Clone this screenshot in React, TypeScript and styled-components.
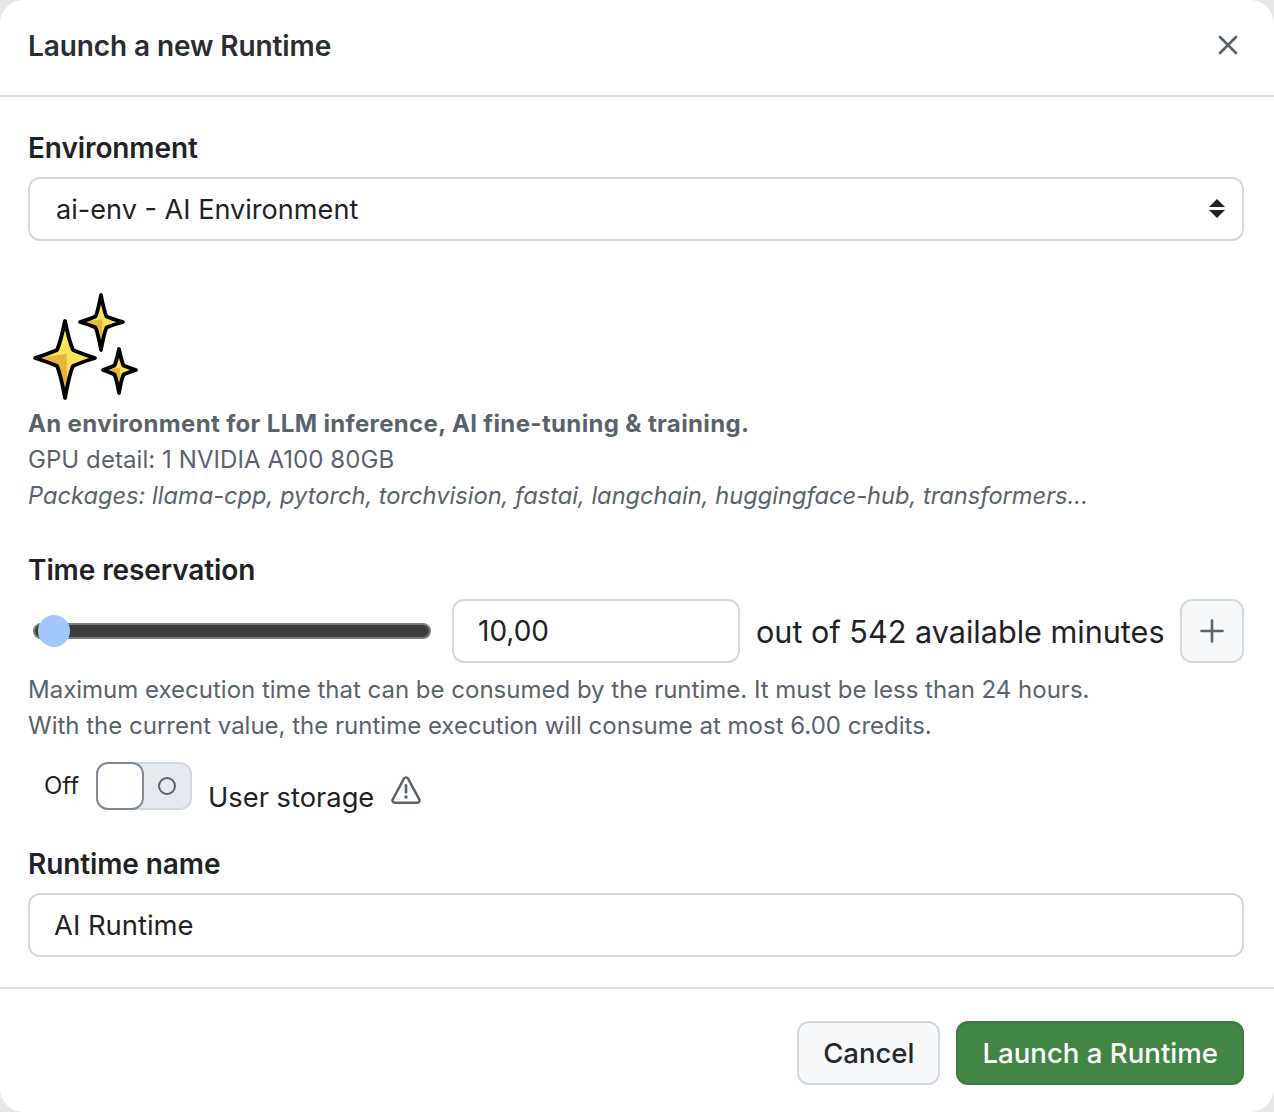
import styled, { createGlobalStyle } from "styled-components";

const GlobalStyle = createGlobalStyle`
  html, body {
    margin: 0;
    padding: 0;
    background: #e6e8ea;
    font-family: Inter, "Liberation Sans", sans-serif;
    color: #1f2328;
  }
`;

interface StarProps {
  cx: number;
  cy: number;
  top: number;
  right: number;
  bottom: number;
  left: number;
  waist: number;
}

function Star({ cx, cy, top, right, bottom, left, waist: w }: StarProps) {
  const near = w * 0.55;
  const far = w * 2;
  const outline = `M${cx} ${top} Q${cx + near} ${cy - far} ${cx + w} ${cy - w}
    Q${cx + far} ${cy - near} ${right} ${cy}
    Q${cx + far} ${cy + near} ${cx + w} ${cy + w}
    Q${cx + near} ${cy + far} ${cx} ${bottom}
    Q${cx - near} ${cy + far} ${cx - w} ${cy + w}
    Q${cx - far} ${cy + near} ${left} ${cy}
    Q${cx - far} ${cy - near} ${cx - w} ${cy - w}
    Q${cx - near} ${cy - far} ${cx} ${top} Z`;
  const shade = `M${left} ${cy} L${cx + w * 0.2} ${cy - w * 0.5} L${cx + w * 0.3} ${bottom}
    L${cx} ${bottom} Q${cx - near} ${cy + far} ${cx - w} ${cy + w}
    Q${cx - far} ${cy + near} ${left} ${cy} Z`;
  return (
    <g>
      <path d={outline} fill="#fde456" />
      <path d={shade} fill="#e7b53d" />
      <path d={outline} fill="none" stroke="#000" strokeWidth="3.8" strokeLinejoin="round" />
    </g>
  );
}

function Sparkles() {
  return (
    <SparkleSvg viewBox="0 0 112 112" width="112" height="112">
      <Star cx={35} cy={68} top={31} right={65} bottom={108} left={5} waist={8} />
      <Star cx={71} cy={32} top={5} right={93} bottom={60} left={50} waist={5.5} />
      <Star cx={89} cy={80} top={59} right={106} bottom={103} left={73} waist={4.5} />
    </SparkleSvg>
  );
}

function SelectArrows() {
  return (
    <ArrowSvg viewBox="0 0 16 20" width="16" height="20">
      <path d="M8 0 L16 8 H0 Z M0 11 H16 L8 19 Z" fill="#1f2328" />
    </ArrowSvg>
  );
}

function CloseIcon() {
  return (
    <svg viewBox="0 0 20 20" width="20" height="20">
      <path d="M2 2 L18 18 M18 2 L2 18" stroke="#59636e" strokeWidth="2.6" strokeLinecap="round" />
    </svg>
  );
}

function PlusIcon() {
  return (
    <svg viewBox="0 0 24 24" width="24" height="24">
      <path d="M12 1.5 V22.5 M1.5 12 H22.5" stroke="#59636e" strokeWidth="2.6" strokeLinecap="round" />
    </svg>
  );
}

function AlertIcon() {
  return (
    <svg viewBox="0 0 32 32" width="30" height="30">
      <path
        d="M16 2.5 C15 2.5 14.3 3 13.8 3.9 L1.9 26 C1 27.8 2.1 29.5 4 29.5 H28 C29.9 29.5 31 27.8 30.1 26 L18.2 3.9 C17.7 3 17 2.5 16 2.5 Z"
        fill="none"
        stroke="#59636e"
        strokeWidth="2.6"
        strokeLinejoin="round"
      />
      <path d="M16 11 V18.5" stroke="#59636e" strokeWidth="2.8" strokeLinecap="round" />
      <circle cx="16" cy="23.4" r="1.9" fill="#59636e" />
    </svg>
  );
}

export default function App() {
  return (
    <>
      <GlobalStyle />
      <Dialog>
        <Header>
          <Title>Launch a new Runtime</Title>
          <CloseButton>
            <CloseIcon />
          </CloseButton>
        </Header>
        <Body>
          <FieldLabel>Environment</FieldLabel>
          <SelectBox>
            <span>ai-env - AI Environment</span>
            <SelectArrows />
          </SelectBox>
          <EnvironmentCard>
            <Sparkles />
            <EnvTitle>An environment for LLM inference, AI fine-tuning &amp; training.</EnvTitle>
            <EnvLine>GPU detail: 1 NVIDIA A100 80GB</EnvLine>
            <EnvPackages>
              Packages: llama-cpp, pytorch, torchvision, fastai, langchain, huggingface-hub,
              transformers...
            </EnvPackages>
          </EnvironmentCard>
          <TimeLabel>Time reservation</TimeLabel>
          <TimeRow>
            <Slider>
              <SliderThumb />
            </Slider>
            <MinutesBox>10,00</MinutesBox>
            <MinutesText>out of 542 available minutes</MinutesText>
            <PlusButton>
              <PlusIcon />
            </PlusButton>
          </TimeRow>
          <HintBlock>
            <Hint>
              Maximum execution time that can be consumed by the runtime. It must be less than 24
              hours.
            </Hint>
            <Hint>With the current value, the runtime execution will consume at most 6.00 credits.</Hint>
          </HintBlock>
          <StorageRow>
            <ToggleText>Off</ToggleText>
            <Toggle>
              <ToggleKnob />
              <ToggleCircle />
            </Toggle>
            <StorageLabel>User storage</StorageLabel>
            <AlertWrap>
              <AlertIcon />
            </AlertWrap>
          </StorageRow>
          <NameLabel>Runtime name</NameLabel>
          <NameInput>AI Runtime</NameInput>
        </Body>
        <Footer>
          <CancelButton>Cancel</CancelButton>
          <LaunchButton>Launch a Runtime</LaunchButton>
        </Footer>
      </Dialog>
    </>
  );
}

const Dialog = styled.div`
  width: 1274px;
  height: 1112px;
  box-sizing: border-box;
  background: #fff;
  border-radius: 24px;
  display: flex;
  flex-direction: column;
  overflow: hidden;
`;

const Header = styled.div`
  height: 97px;
  box-sizing: border-box;
  flex-shrink: 0;
  display: flex;
  align-items: center;
  justify-content: space-between;
  padding: 0 36px 6px 28px;
  border-bottom: 2px solid #d8dee4;
`;

const Title = styled.div`
  padding-top: 2px;
  font-size: 28px;
  font-weight: 600;
  letter-spacing: -0.1px;
  color: #2a2e33;
`;

const CloseButton = styled.div`
  display: flex;
`;

const Body = styled.div`
  flex: 1;
  padding: 0 30px 0 28px;
  display: flex;
  flex-direction: column;
`;

const FieldLabel = styled.div`
  font-size: 28px;
  font-weight: 600;
  letter-spacing: -0.1px;
  line-height: 40px;
  margin-top: 31px;
  color: #1f2328;
`;

const SelectBox = styled.div`
  height: 64px;
  box-sizing: border-box;
  margin-top: 9px;
  padding: 0 17px 0 26px;
  border: 2px solid #d1d9e0;
  border-radius: 12px;
  display: flex;
  align-items: center;
  justify-content: space-between;
  font-size: 27.1px;
  color: #1f2328;
`;

const ArrowSvg = styled.svg`
  display: block;
`;

const EnvironmentCard = styled.div`
  margin-top: 49px;
  display: flex;
  flex-direction: column;
`;

const SparkleSvg = styled.svg`
  display: block;
  margin-left: 2px;
`;

const EnvTitle = styled.div`
  font-size: 24px;
  font-weight: 700;
  letter-spacing: 0.36px;
  line-height: 36px;
  margin-top: 4px;
  color: #59636e;
`;

const EnvLine = styled.div`
  font-size: 24px;
  letter-spacing: 0.07px;
  line-height: 36px;
  color: #59636e;
`;

const EnvPackages = styled(EnvLine)`
  font-size: 23.65px;
  letter-spacing: 0;
  font-style: italic;
`;

const TimeLabel = styled(FieldLabel)`
  margin-top: 36px;
`;

const TimeRow = styled.div`
  display: flex;
  align-items: center;
  margin-top: 9px;
  height: 64px;
`;

const Slider = styled.div`
  position: relative;
  width: 398px;
  height: 16px;
  box-sizing: border-box;
  margin-left: 5px;
  background: #3d3d3d;
  border: 2px solid #7b7b7b;
  border-radius: 8px;
  flex-shrink: 0;
`;

const SliderThumb = styled.div`
  position: absolute;
  left: 3px;
  top: 50%;
  width: 32px;
  height: 32px;
  transform: translateY(-50%);
  border-radius: 50%;
  background: #a2c7fd;
`;

const MinutesBox = styled.div`
  width: 288px;
  height: 64px;
  box-sizing: border-box;
  margin-left: 21px;
  padding-left: 24px;
  border: 2px solid #d1d9e0;
  border-radius: 12px;
  display: flex;
  align-items: center;
  font-size: 28px;
  color: #1f2328;
  flex-shrink: 0;
`;

const MinutesText = styled.div`
  margin-left: 16px;
  font-size: 30.6px;
  color: #1f2328;
  white-space: nowrap;
`;

const PlusButton = styled.div`
  width: 64px;
  height: 64px;
  box-sizing: border-box;
  margin-left: auto;
  border: 2px solid #d1d9e0;
  border-radius: 12px;
  background: #f6f8fa;
  display: flex;
  align-items: center;
  justify-content: center;
`;

const HintBlock = styled.div`
  margin-top: 9px;
`;

const Hint = styled.div`
  font-size: 24px;
  line-height: 36px;
  color: #59636e;
`;

const StorageRow = styled.div`
  display: flex;
  align-items: flex-start;
  height: 82px;
  margin-top: 18px;
  padding-left: 16px;
`;

const ToggleText = styled.div`
  font-size: 24px;
  line-height: 48px;
  width: 52px;
  color: #1f2328;
`;

const Toggle = styled.div`
  position: relative;
  width: 96px;
  height: 48px;
  box-sizing: border-box;
  background: #e6eaef;
  border: 2px solid #d1d9e0;
  border-radius: 12px;
`;

const ToggleKnob = styled.div`
  position: absolute;
  left: -2px;
  top: -2px;
  width: 48px;
  height: 48px;
  box-sizing: border-box;
  background: #fff;
  border: 2px solid #818b98;
  border-radius: 12px;
`;

const ToggleCircle = styled.div`
  position: absolute;
  right: 14px;
  top: 13px;
  width: 18px;
  height: 18px;
  box-sizing: border-box;
  border: 2px solid #59636e;
  border-radius: 50%;
`;

const StorageLabel = styled.div`
  font-size: 27.3px;
  line-height: 36px;
  margin-top: 18px;
  margin-left: 16px;
  color: #1f2328;
`;

const AlertWrap = styled.div`
  display: flex;
  margin-top: 13px;
  margin-left: 17px;
`;

const NameLabel = styled(FieldLabel)`
  margin-top: 0;
`;

const NameInput = styled.div`
  height: 64px;
  box-sizing: border-box;
  margin-top: 9px;
  padding-left: 24px;
  border: 2px solid #d1d9e0;
  border-radius: 12px;
  display: flex;
  align-items: center;
  font-size: 27.4px;
  color: #1f2328;
`;

const Footer = styled.div`
  height: 125px;
  box-sizing: border-box;
  flex-shrink: 0;
  display: flex;
  align-items: flex-start;
  justify-content: flex-end;
  gap: 16px;
  padding: 32px 30px 0 0;
  border-top: 2px solid #d8dee4;
`;

const CancelButton = styled.div`
  height: 64px;
  box-sizing: border-box;
  padding: 0 24px;
  border: 2px solid #d1d9e0;
  border-radius: 12px;
  background: #f6f8fa;
  display: flex;
  align-items: center;
  font-size: 27.5px;
  font-weight: 500;
  color: #25292e;
`;

const LaunchButton = styled(CancelButton)`
  font-size: 27.6px;
  background: #428646;
  border-color: #3d7a41;
  color: #fff;
`;
